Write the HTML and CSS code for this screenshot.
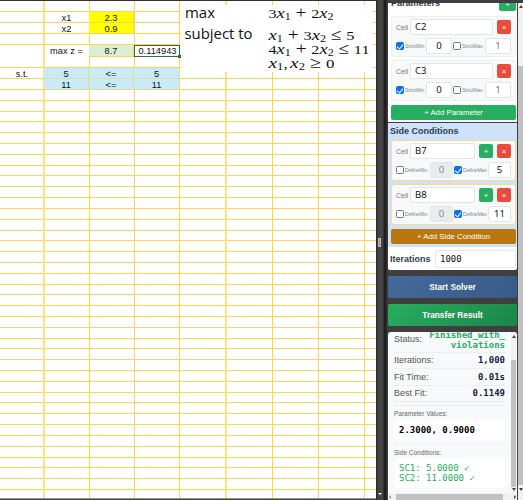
FILE: index.html
```html
<!DOCTYPE html>
<html lang="en">
<head>
    <meta charset="UTF-8">
    <title>Solver</title>
    <link rel="stylesheet" href="styles.css">
</head>
<body>

<div class="app">

    <div class="sheet">
        <div class="cells">
            <div></div><div></div><div></div><div></div>
            <div></div><div>x1</div><div class="var">2.3</div><div></div>
            <div></div><div>x2</div><div class="var">0.9</div><div></div>
            <div></div><div></div><div></div><div></div>
            <div></div><div>max z =</div><div class="goal">8.7</div><div class="selected">0.114943</div>
            <div></div><div></div><div></div><div></div>
            <div>s.t.</div><div class="cond">5</div><div class="cond">&lt;=</div><div class="cond">5</div>
            <div></div><div class="cond">11</div><div class="cond">&lt;=</div><div class="cond">11</div>
        </div>

        <!-- floating picture with the problem -->
        <svg class="formula" width="192" height="67" viewBox="181 5 192 67">
            <g class="words">
                <text x="185" y="18" textLength="30" lengthAdjust="spacingAndGlyphs">max</text>
                <text x="184.500" y="39" textLength="68" lengthAdjust="spacingAndGlyphs">subject to</text>
            </g>
            <g class="math">
                <text x="268.500" y="17.500" textLength="65" lengthAdjust="spacingAndGlyphs">3<tspan class="it">x</tspan><tspan class="sub" dy="2">1</tspan><tspan class="op" dy="-2"> + </tspan>2<tspan class="it">x</tspan><tspan class="sub" dy="2">2</tspan></text>
                <text x="268.500" y="39.500" textLength="86" lengthAdjust="spacingAndGlyphs"><tspan class="it">x</tspan><tspan class="sub" dy="2">1</tspan><tspan class="op" dy="-2"> + </tspan>3<tspan class="it">x</tspan><tspan class="sub" dy="2">2</tspan><tspan class="op" dy="-2"> ≤ </tspan>5</text>
                <text x="268.500" y="53.500" textLength="101" lengthAdjust="spacingAndGlyphs">4<tspan class="it">x</tspan><tspan class="sub" dy="2">1</tspan><tspan class="op" dy="-2"> + </tspan>2<tspan class="it">x</tspan><tspan class="sub" dy="2">2</tspan><tspan class="op" dy="-2"> ≤ </tspan>11</text>
                <text x="268.500" y="67.500" textLength="66" lengthAdjust="spacingAndGlyphs"><tspan class="it">x</tspan><tspan class="sub" dy="2">1</tspan><tspan dy="-2">,</tspan><tspan class="it" dx="2">x</tspan><tspan class="sub" dy="2">2</tspan><tspan class="op" dy="-2"> ≥ </tspan>0</text>
            </g>
        </svg>
    </div>

    <div class="splitter">
        <span class="grip"></span>
        <span class="down"></span>
    </div>

    <div class="sidebar">
        <div class="panel params">
            <div class="head"><h2>Parameters</h2><span class="btn add">+</span></div>
            <div class="card">
                <div class="line"><label>Cell</label><span class="input cell">C2</span><span class="btn del">×</span></div>
                <div class="line opts"><i class="check on"></i><small>StrictMin</small><span class="input num">0</span><i class="check"></i><small>StrictMax</small><span class="input num dim">1</span></div>
            </div>
            <div class="card">
                <div class="line"><label>Cell</label><span class="input cell">C3</span><span class="btn del">×</span></div>
                <div class="line opts"><i class="check on"></i><small>StrictMin</small><span class="input num">0</span><i class="check"></i><small>StrictMax</small><span class="input num dim">1</span></div>
            </div>
            <div class="wide green">+ Add Parameter</div>
        </div>

        <div class="panel sides">
            <h2>Side Conditions</h2>
            <div class="card">
                <div class="line"><label>Cell</label><span class="input cell">B7</span><span class="btn add">+</span><span class="btn del">×</span></div>
                <div class="line opts"><i class="check"></i><small>DefineMin</small><span class="input num off">0</span><i class="check on"></i><small>DefineMax</small><span class="input num">5</span></div>
            </div>
            <div class="card">
                <div class="line"><label>Cell</label><span class="input cell">B8</span><span class="btn add">+</span><span class="btn del">×</span></div>
                <div class="line opts"><i class="check"></i><small>DefineMin</small><span class="input num off">0</span><i class="check on"></i><small>DefineMax</small><span class="input num">11</span></div>
            </div>
            <div class="wide orange">+ Add Side Condition</div>
        </div>

        <div class="panel iterations">
            <h2>Iterations</h2><span class="input mono">1000</span>
        </div>

        <div class="action start">Start Solver</div>
        <div class="action transfer">Transfer Result</div>

        <div class="results">
            <div class="content">
                <div class="row status"><span>Status:</span><b>Finished_with_<br>violations</b></div>
                <div class="row"><span>Iterations:</span><b>1,000</b></div>
                <div class="row"><span>Fit Time:</span><b>0.01s</b></div>
                <div class="row"><span>Best Fit:</span><b>0.1149</b></div>
                <div class="group">
                    <p>Parameter Values:</p>
                    <div class="box"><b>2.3000, 0.9000</b></div>
                </div>
                <div class="group second">
                    <p>Side Conditions:</p>
                    <div class="box ok">SC1: 5.0000 ✓<br>SC2: 11.0000 ✓</div>
                </div>
            </div>
            <div class="vbar inner"><i class="up"></i><span class="thumb"></span><i class="dn"></i></div>
        </div>

        <div class="hbar"><i class="lt"></i><span class="thumb"></span><i class="rt"></i></div>
    </div>

    <div class="vbar outer"><i class="up"></i><span class="thumb"></span><i class="dn"></i></div>

</div>

</body>
</html>
```

FILE: styles.css
```css
*{
    box-sizing: border-box;
}
body{
    margin: 0;
    font-family: "Liberation Sans", Arial, sans-serif;
    background: #3f3f3f;
}
h2, p{
    margin: 0;
}
.app{
    display: flex;
    width: 523px;
    height: 500px;
    overflow: hidden;
}

/* spreadsheet */
.sheet{
    position: relative;
    width: 376px;
    height: 499px;
    border-top: 1px solid #333;
    border-bottom: 1px solid #999;
    background-color: #fff;
    background-image:
        linear-gradient(#ffd454, #ffd454),
        linear-gradient(#ffd454, #ffd454),
        linear-gradient(#ffd454, #ffd454),
        linear-gradient(#ffd454, #ffd454),
        linear-gradient(#ffe08a, #ffe08a),
        linear-gradient(#ffd454, #ffd454),
        linear-gradient(#ffd454, #ffd454),
        linear-gradient(#ffe08a, #ffe08a),
        repeating-linear-gradient(#ffd454 0, #ffd454 1px, transparent 1px, transparent 10.81px);
    background-size: 1px 100%, 1px 100%, 1px 100%, 1px 100%, 2px 100%, 1px 100%, 1px 100%, 2px 100%, 100% 411px;
    background-position: 89px 0, 134px 0, 179px 0, 364px 0, 43px 0, 272px 0, 318px 0, 225px 0, 0 88px;
    background-repeat: no-repeat;
}
.cells{
    display: grid;
    grid-template-columns: 44px 45px 45px 46px;
    grid-template-rows: 11px 11px 11px 11px 12px 11px 11px 11px;
    font-size: 9.3px;
    line-height: 12px;
    text-align: center;
    color: #111;
    background: repeating-linear-gradient(transparent 0, transparent 10.1px, #ffd454 10.1px, #ffd454 11.1px) 0 0 / 376px 89px;
    width: 376px;
}
.cells .var, .cells .goal, .cells .cond{
    border-right: 1px solid #ffd454;
    border-bottom: 1px solid #ffd454;
}
.cells .var{
    background: #ff0;
}
.cells .goal{
    background: #d9efd3;
}
.cells .cond{
    background: #c9ebf7;
    border-color: #e0dc9a;
}
.cells .selected{
    position: relative;
    border: 1px solid #2f6b4b;
    line-height: 11px;
    white-space: nowrap;
    text-indent: 1px;
}
.selected::after{
    content: "";
    position: absolute;
    right: -2px;
    bottom: -2px;
    width: 3px;
    height: 3px;
    background: #2f6b4b;
}
.formula{
    position: absolute;
    left: 181px;
    top: 4px;
    overflow: visible;
    background: #fff;
}
.words{
    font: 14px "Open Sans", sans-serif;
    fill: #111;
}
.math{
    font: 13.5px "Liberation Serif", serif;
    fill: #111;
}
.it{
    font-size: 15.5px;
    font-style: italic;
}
.op{
    font-size: 16px;
}
.sub{
    font-size: 10px;
}

/* splitter */
.splitter{
    width: 12px;
    display: flex;
    flex-direction: column;
    align-items: center;
    justify-content: space-between;
    padding: 238px 5px 3px 0;
    background: linear-gradient(90deg, #2c2c2c 0, #2c2c2c 1px, #444 2px, #444 7px, #1f1f1f 8px, #1f1f1f 10px, #3c3c3c 11px);
}
.grip{
    width: 3px;
    height: 9px;
    background: #999;
    border: 1px solid #bbb;
}
.down{
    margin-bottom: 2px;
    border: 2px solid transparent;
    border-top-color: #fff;
    border-bottom: 0;
}

/* sidebar */
.sidebar{
    width: 129px;
    height: 497px;
    margin-top: 3px;
    margin-right: 1px;
    overflow: hidden;
    display: flex;
    flex-direction: column;
    flex: none;
}
.panel{
    background: #fff;
    padding: 0 1px 0 3px;
    flex: none;
}
h2{
    font-size: 9px;
    line-height: 12px;
    color: #2c3e50;
}
.params{
    height: 119px;
}
.head{
    display: flex;
    justify-content: space-between;
    height: 12px;
    margin-bottom: 1px;
}
.head h2{
    margin-top: -6px;
    line-height: 13px;
}
.head .btn{
    margin-top: -6px;
    width: 17px;
}
.card{
    height: 41px;
    padding: 2px 4px 3px;
    margin-bottom: 3px;
    border: 1px solid #edf0f2;
    border-radius: 3px;
    background: #f8f9fa;
}
.line{
    display: flex;
    align-items: center;
    height: 16px;
}
.opts{
    margin-top: 3px;
}
label{
    width: 14px;
    flex: none;
    font-size: 7px;
    color: #777;
}
.input{
    height: 16px;
    padding-left: 4px;
    border: 1px solid #e3e6e8;
    border-radius: 2px;
    background: #fff;
    font: 9.5px/14px "Noto Sans", sans-serif;
    color: #111;
}
.cell{
    flex: 1;
}
.btn{
    width: 14px;
    height: 14px;
    margin-left: 4px;
    border-radius: 2px;
    color: #fff;
    font-size: 8px;
    display: flex;
    align-items: center;
    justify-content: center;
}
.add{
    background: #27ae60;
}
.del{
    background: #e74c3c;
}
small{
    width: 20px;
    margin: 0 1px;
    font-size: 5.2px;
    letter-spacing: -0.1px;
    color: #888;
    white-space: nowrap;
}
.check{
    width: 8px;
    height: 8px;
    flex: none;
    border: 1px solid #777;
    border-radius: 1.5px;
    background: #fff;
}
.check.on{
    background: #0b73e8;
    border-color: #0b73e8;
    display: flex;
    justify-content: center;
}
.check.on::after{
    content: "";
    width: 3px;
    height: 5px;
    border: solid #fff;
    border-width: 0 1px 1px 0;
    transform: rotate(40deg);
}
.num{
    width: 26px;
    flex: none;
    padding: 0;
    text-align: center;
    margin-right: 1px;
}
.num:last-child{
    margin: 0 0 0 auto;
}
.dim{
    color: #777;
}
.off{
    background: #e9ecec;
    color: #888;
}
.wide{
    height: 15px;
    border-radius: 2px;
    color: #fff;
    font-size: 7.8px;
    line-height: 15px;
    text-align: center;
}
.params .wide{
    margin-top: 4px;
}
.green{
    background: #27ae60;
}
.orange{
    background: #b9770e;
}
.sides{
    height: 124px;
    margin-top: 1px;
    padding-top: 2px;
    background: #cfe2fc;
}
.sides h2, .iterations h2{
    margin-left: -1px;
}
.sides .card{
    border-color: #f6dc8c;
    margin-top: 3px;
}
.sides .num{
    width: 23px;
}
.sides small{
    width: 24px;
}
.sides .wide{
    margin-top: 4px;
}
.iterations{
    height: 23px;
    display: flex;
    align-items: center;
    border-radius: 0 0 2px 2px;
}
.iterations h2{
    width: 45px;
}
.mono{
    flex: 1;
    height: 18px;
    font: 9px/16px "DejaVu Sans Mono", monospace;
}
.action{
    flex: none;
    height: 22px;
    margin-top: 6px;
    border-radius: 2px;
    color: #fff;
    font-size: 8.3px;
    font-weight: bold;
    line-height: 22px;
    text-align: center;
}
.start{
    background: linear-gradient(135deg, #446a9c, #385a88);
}
.transfer{
    background: linear-gradient(135deg, #27ae60, #1e8449);
}

/* results */
.results{
    flex: none;
    display: flex;
    height: 161px;
    margin-top: 6px;
    overflow: hidden;
    background: #f8f9fa;
    border-radius: 3px 3px 0 0;
}
.content{
    width: 123px;
    padding: 0 6px;
    flex: none;
}
.row{
    display: flex;
    justify-content: space-between;
    align-items: center;
    height: 16.5px;
    border-bottom: 1px solid #eceff1;
    font-size: 9px;
    color: #555;
}
.row b{
    font: bold 9px/10px "DejaVu Sans Mono", monospace;
    color: #14213a;
    text-align: right;
}
.row.status{
    height: 20.5px;
    align-items: flex-start;
}
.status span{
    margin-top: 2px;
}
.status b{
    margin-top: -2px;
    color: #27ae60;
}
.group{
    margin-top: 3px;
    padding-top: 4px;
    border-top: 1px solid #eceff1;
}
.group.second{
    margin-top: 4px;
}
.group p{
    font-size: 6.5px;
    line-height: 8px;
    color: #666;
}
.box{
    margin-top: 2px;
    height: 20px;
    padding: 5px;
    border-radius: 3px;
    background: #fff;
    font: 9px/10px "DejaVu Sans Mono", monospace;
    white-space: nowrap;
}
.box.ok{
    height: 29px;
    padding-top: 4px;
    color: #27ae60;
}

/* scrollbars */
.vbar{
    display: flex;
    flex-direction: column;
    align-items: center;
    background: #f1f1f1;
    flex: none;
}
.vbar .thumb{
    width: 100%;
    background: #c1c1c1;
}
.vbar i, .hbar i{
    border: 2px solid transparent;
    flex: none;
}
.vbar .up{
    border-top: 0;
    border-bottom: 3px solid #444;
}
.vbar .dn{
    border-bottom: 0;
    border-top: 3px solid #444;
    margin-top: auto;
}
.inner{
    width: 5px;
    margin-right: 1px;
    padding: 3px 0 2px;
}
.inner .thumb{
    height: 127px;
    margin-top: 22px;
}
.outer{
    width: 5px;
    height: 497px;
    margin-top: 3px;
    padding: 2px 0 9px;
}
.outer .thumb{
    height: 419px;
    margin-top: 58px;
}
.hbar{
    display: flex;
    align-items: center;
    justify-content: space-between;
    height: 8px;
    padding: 0 1px;
    background: #f1f1f1;
}
.hbar .thumb{
    width: 107px;
    height: 6px;
    margin-right: 7px;
    background: #c1c1c1;
}
.hbar .lt{
    border-left: 0;
    border-right-color: #999;
}
.hbar .rt{
    border-right: 0;
    border-left-color: #444;
}
```
